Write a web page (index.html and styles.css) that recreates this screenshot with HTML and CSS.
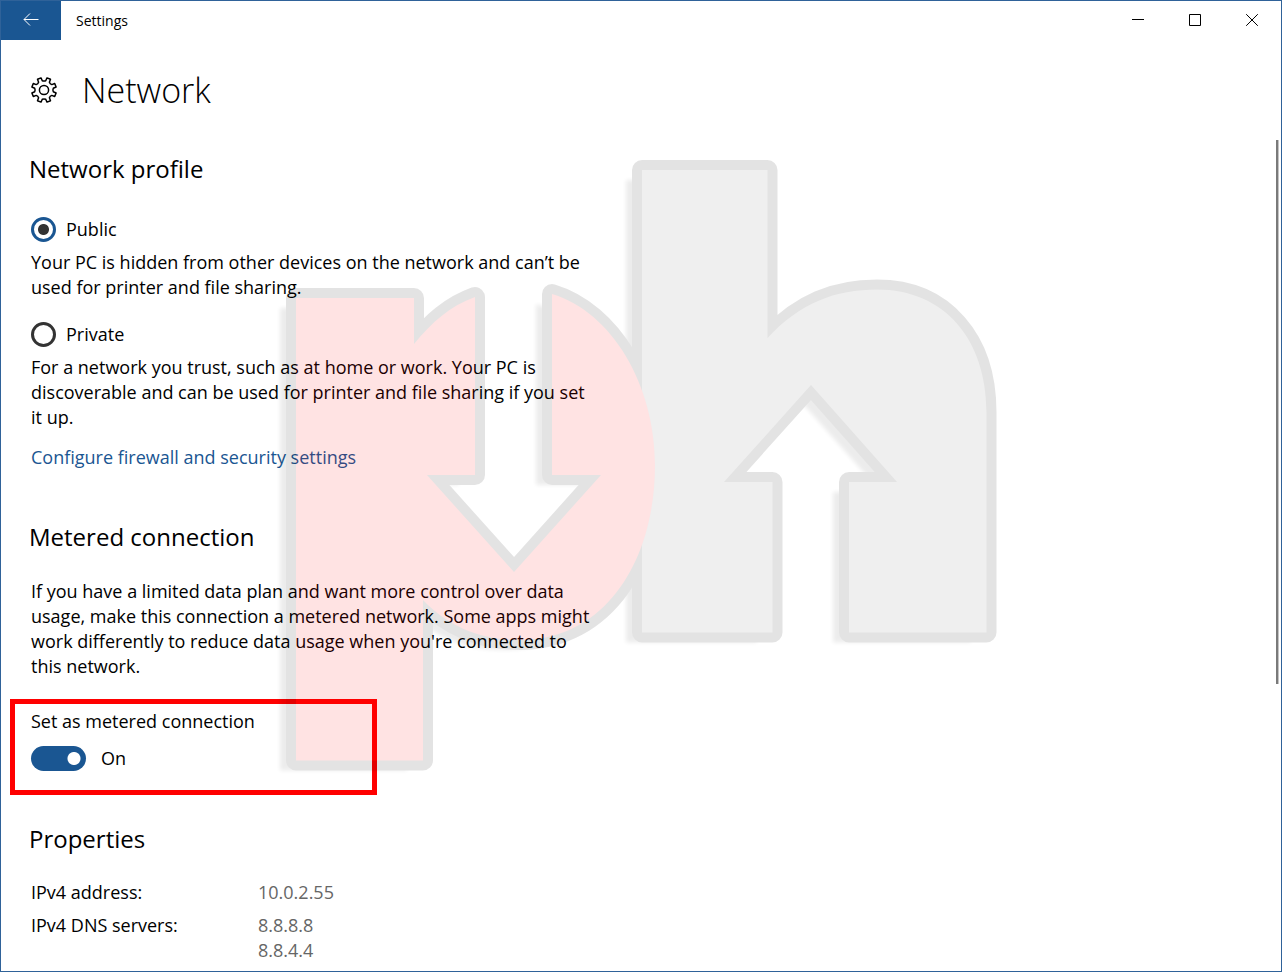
FILE: index.html
```html
<!DOCTYPE html>
<html lang="en">
<head>
  <meta charset="utf-8">
  <title>Settings</title>
  <meta name="viewport" content="width=device-width, initial-scale=1">
  <link rel="stylesheet" href="styles.css">
</head>
<body>
  <div class="window">
    <header class="titlebar">
      <button class="back" type="button" aria-label="Back">
        <svg width="16" height="14" viewBox="0 0 16 14"><path d="M15.500 6.500H1M7 .5l-6 6 6 6"/></svg>
      </button>
      <span class="app-name">Settings</span>
      <div class="window-controls">
        <button class="control" type="button" aria-label="Minimize">
          <svg width="12" height="12" viewBox="0 0 12 12"><path d="M0 5.500h12"/></svg>
        </button>
        <button class="control" type="button" aria-label="Maximize">
          <svg width="12" height="12" viewBox="0 0 12 12"><path d="M.5.5h11v11H.5z"/></svg>
        </button>
        <button class="control" type="button" aria-label="Close">
          <svg width="12" height="12" viewBox="0 0 12 12"><path d="M.2.2l11.600 11.600M11.800.2L.2 11.800"/></svg>
        </button>
      </div>
    </header>

    <main class="page">
      <div class="page-head">
        <svg class="gear" width="28" height="28" viewBox="-14 -14 28 28">
          <circle r="4.600"/>
          <path d="M-1.700 -9.300Q0 -8.500 1.700 -9.300L3 -12.100L6.500 -10.700L5.400 -7.800Q6 -6.100 7.800 -5.400L10.700 -6.500L12.100 -3L9.300 -1.700Q8.500 0 9.300 1.700L12.100 3L10.700 6.500L7.800 5.400Q6 6.100 5.400 7.800L6.500 10.700L3 12.100L1.700 9.300Q0 8.500 -1.700 9.300L-3 12.100L-6.500 10.700L-5.400 7.800Q-6 6.100 -7.800 5.400L-10.700 6.500L-12.100 3L-9.300 1.700Q-8.500 0 -9.300 -1.700L-12.100 -3L-10.700 -6.500L-7.800 -5.400Q-6 -6.100 -5.400 -7.800L-6.500 -10.700L-3 -12.100Z"/>
        </svg>
        <h1>Network</h1>
      </div>

      <section class="profile">
        <h2>Network profile</h2>
        <label class="choice"><input type="radio" name="profile" checked>Public</label>
        <p class="hint">Your PC is hidden from other devices on the network and can’t be used for printer and file sharing.</p>
        <label class="choice second"><input type="radio" name="profile">Private</label>
        <p class="hint">For a network you trust, such as at home or work. Your PC is discoverable and can be used for printer and file sharing if you set it up.</p>
        <a class="link" href="#">Configure firewall and security settings</a>
      </section>

      <section class="metered">
        <h2>Metered connection</h2>
        <p class="text">If you have a limited data plan and want more control over data usage, make this connection a metered network. Some apps might work differently to reduce data usage when you're connected to this network.</p>
        <div class="highlight">
          <label for="metered">Set as metered connection</label>
          <div class="switch-row">
            <input class="switch" id="metered" type="checkbox" role="switch" checked>
            <span>On</span>
          </div>
        </div>
      </section>

      <section class="properties">
        <h2>Properties</h2>
        <table>
          <tr><th scope="row">IPv4 address:</th><td>10.0.2.55</td></tr>
          <tr><th scope="row">IPv4 DNS servers:</th><td>8.8.8.8<br>8.8.4.4</td></tr>
        </table>
      </section>
    </main>

    <svg class="watermark" width="740" height="640" viewBox="270 150 740 640" aria-hidden="true">
      <defs>
        <filter id="soft"><feGaussianBlur stdDeviation="2"/></filter>
        <path id="mark-h" d="M642 170H767.500V338C800 303 835 289.500 877 289.500C945 289.500 986.500 340 986.500 412V632.500H849V482H897L811 385L724 482H772.500V632.500H642Z"/>
        <path id="mark-p" d="M296 298H414V344C432 322 450 306 475 297V475H427L514 572L601 475H552V294C612 312 655 385 655 465C655 560 606 640 520 640C482 640 450 628 423 600V760.500H296Z"/>
      </defs>
      <use class="mark-shadow" href="#mark-h" x="-16" y="10"/>
      <use class="mark-shadow" href="#mark-p" x="-16" y="10"/>
      <use class="mark-edge" href="#mark-p"/>
      <use class="mark-edge" href="#mark-h"/>
      <use class="mark-gray" href="#mark-h"/>
      <use class="mark-red" href="#mark-p"/>
    </svg>
    <div class="scroll-thumb"></div>
  </div>
</body>
</html>
```
FILE: styles.css
```css
* {
  box-sizing: border-box;
}

body {
  margin: 0;
  background: #fff;
  color: #000;
  font-family: "Open Sans", "Noto Sans", sans-serif;
  font-size: 18px;
  line-height: 25px;
}

h1, h2, p {
  margin: 0;
  font-weight: 400;
}

.window {
  position: relative;
  min-height: 100vh;
  border: 1px solid #2f6299;
}

.titlebar {
  display: flex;
  height: 39px;
  align-items: stretch;
}

.titlebar button {
  display: flex;
  align-items: center;
  justify-content: center;
  padding: 0 0 2px;
  border: 0;
}

.titlebar svg {
  fill: none;
  stroke: currentColor;
}

.titlebar .back {
  width: 60px;
  background: #1a5692;
  color: #fff;
}

.app-name {
  align-self: center;
  margin-left: 15px;
  font-size: 14px;
}

.window-controls {
  display: flex;
  margin-left: auto;
  padding-right: 1px;
}

.control {
  width: 57px;
  background: transparent;
  color: #000;
}

.page {
  padding: 25px 28px 8px;
}

.page-head {
  display: flex;
  align-items: center;
  gap: 24px;
  height: 50px;
}

.gear {
  margin-left: 1px;
  fill: none;
  stroke: #000;
  stroke-width: 1.500;
  stroke-linejoin: round;
}

h1 {
  font-size: 34px;
  font-weight: 300;
  line-height: 48px;
}

h2 {
  font-size: 24px;
  line-height: 32px;
}

.profile {
  margin-top: 38px;
}

.choice {
  display: flex;
  align-items: center;
  gap: 10px;
  width: fit-content;
  margin: 32px 0 8px 2px;
}

.choice.second {
  margin-top: 22px;
}

.choice input {
  appearance: none;
  width: 25px;
  height: 25px;
  margin: 0;
  border: 3px solid #333;
  border-radius: 50%;
}

.choice input:checked {
  border-color: #1a5692;
  background: radial-gradient(circle, #333 5px, transparent 6px);
}

.hint, .text {
  max-width: 560px;
  margin-left: 2px;
}

.link {
  display: block;
  width: fit-content;
  margin: 15px 0 0 2px;
  color: #1a5692;
  text-decoration: none;
}

.metered {
  margin-top: 51px;
}

.text {
  margin-top: 26px;
}

.highlight {
  display: flex;
  flex-direction: column;
  gap: 12px;
  width: 367px;
  margin: 20px 0 0 -19px;
  padding: 5px 16px 19px;
  border: 5px solid #f00;
}

.switch-row {
  display: flex;
  align-items: center;
  gap: 15px;
}

.switch {
  appearance: none;
  width: 55px;
  height: 25px;
  margin: 0;
  border-radius: 13px;
  background: radial-gradient(circle at 43px 50%, #fff 6px, #1a5692 7px);
}

.properties {
  margin-top: 28px;
}

table {
  margin: 25px 0 0 2px;
  border-collapse: collapse;
}

th, td {
  padding: 0 0 8px;
  font-weight: 400;
  text-align: left;
  vertical-align: top;
}

tr:last-child > * {
  padding-bottom: 0;
}

th {
  width: 227px;
}

td {
  color: #666;
}

.watermark {
  position: absolute;
  top: 149px;
  left: 269px;
  opacity: 0.105;
  pointer-events: none;
}

.mark-shadow {
  fill: #000;
  opacity: 0.7;
  filter: url(#soft);
}

.mark-edge {
  fill: #000;
  stroke: #000;
  stroke-width: 20px;
  stroke-linejoin: round;
}

.mark-gray {
  fill: #6e6e6e;
}

.mark-red {
  fill: #ff0008;
}

.scroll-thumb {
  position: absolute;
  top: 139px;
  right: 2px;
  width: 3px;
  height: 544px;
  border-right: 1px solid #c4c4c4;
  background: #7a7a7a;
}
```
